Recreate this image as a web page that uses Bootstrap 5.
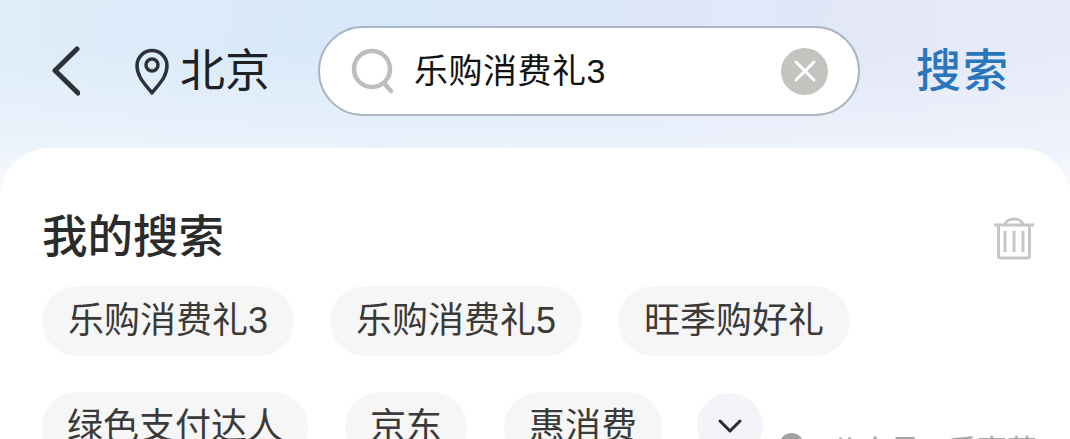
<!DOCTYPE html>
<html lang="zh-CN">
<head>
  <meta charset="UTF-8" />
  <meta name="viewport" content="width=device-width, initial-scale=1.0" />
  <title>搜索</title>
  <link href="https://cdn.jsdelivr.net/npm/bootstrap@5.3.3/dist/css/bootstrap.min.css" rel="stylesheet">
  <style>
    html, body { height: 100%; }
    body {
      overflow: hidden;
      position: relative;
      font-family: "Liberation Sans", "Noto Sans CJK SC", sans-serif;
      background:
        linear-gradient(180deg, rgba(240,245,252,0) 50px, rgba(240,245,252,.75) 148px, rgba(246,249,253,.95) 175px),
        linear-gradient(100deg, #dfedf9 0%, #d7e8f9 35%, #e2e7f8 72%, #e9ecf9 100%);
      color: #1f2226;
    }
    #top-bar { height: 148px; padding: 0 0 0 52px; }
    #back-btn { width: 28px; height: 50px; margin-right: 54px; margin-top: -6px; }
    #pin-icon { width: 36px; height: 48px; margin-right: 10px; margin-top: -6px; }
    #city { font-size: 45px; line-height: 1; width: 90px; margin-right: 48px; margin-top: -6px; color: #1d2125; }
    #search-box {
      width: 542px; height: 90px; margin-top: -6px;
      background: #fff; border: 2px solid #a9b6c2; border-radius: 45px;
      padding: 0 30px 0 31px;
    }
    #search-text { font-size: 34px; line-height: 1; margin-left: 19px; letter-spacing: .5px; color: #111; }
    #clear-btn { width: 47px; height: 47px; background: #c3c3bf; }
    #search-go { font-size: 45px; line-height: 1; font-weight: 500; margin-left: 56px; letter-spacing: 2px; margin-top: -6px; color: #2a76bd; white-space: nowrap; }
    #history {
      height: 291px; background: #fff;
      border-radius: 50px 50px 0 0;
      padding: 67px 36px 0 42px;
    }
    #history-title { font-size: 45.500px; line-height: 1; font-weight: 500; color: #2b2b2b; margin: 0; }
    #tag-wrap { margin-top: 25px; row-gap: 36px; }
    .tag-row { column-gap: 36px; }
    .tag-pill {
      height: 70px; padding: 0 26px; border-radius: 35px;
      background: #f6f6f7; font-size: 36px; line-height: 70px; color: #3a3a3a; white-space: nowrap;
    }
    .tag-row-tight { column-gap: 37px; }
    .tag-row-tight .tag-pill { padding: 0 25px; }
    #more-btn { width: 66px; height: 66px; background: #f3f3f8; margin: 1px 0 0 -2px; }
    #watermark {
      position: absolute; left: 779px; top: 433px;
      font-size: 30px; line-height: 1; color: #a6a6a6; white-space: nowrap;
    }
    #watermark i { width: 25px; height: 25px; background: #a2a2a2; margin-right: 26px; }
    #watermark span { margin-top: 3px; }
  </style>
</head>
<body>

  <!-- Top bar -->
  <div id="top-bar" class="d-flex align-items-center">
    <svg id="back-btn" class="flex-shrink-0" viewBox="0 0 28 50" fill="none" stroke="#2c3238" stroke-width="5" stroke-linecap="round" stroke-linejoin="round"><path d="M25 3 3 24.500 26 47"/></svg>
    <svg id="pin-icon" class="flex-shrink-0" viewBox="0 0 36 48" fill="none" stroke="#2c3238" stroke-width="3.500" stroke-linejoin="round"><path d="M18 46C11 37 3 30 3 18.500A15 15 0 0 1 33 18.500C33 30 25 37 18 46Z"/><circle cx="18" cy="18" r="6"/></svg>
    <div id="city">北京</div>
    <div id="search-box" class="d-flex align-items-center flex-shrink-0">
      <svg class="flex-shrink-0" width="44" height="46" viewBox="0 0 44 46" fill="none" stroke="#bdbdbd" stroke-width="4.500" stroke-linecap="round"><circle cx="21" cy="21" r="18"/><path d="M33 35 40 43"/></svg>
      <span id="search-text">乐购消费礼3</span>
      <span id="clear-btn" class="ms-auto rounded-circle d-flex align-items-center justify-content-center">
        <svg width="24" height="24" viewBox="0 0 24 24" stroke="#fff" stroke-width="3" stroke-linecap="round"><path d="M3 3 21 21M21 3 3 21"/></svg>
      </span>
    </div>
    <div id="search-go">搜索</div>
  </div>

  <!-- My searches -->
  <div id="history">
    <div class="d-flex align-items-center justify-content-between">
      <h2 id="history-title">我的搜索</h2>
      <svg width="40" height="44" viewBox="0 0 40 44" fill="none" stroke="#c6c6c6" stroke-width="3" stroke-linejoin="round"><path d="M0 9H40M11 9C12 1 28 1 29 9M4.500 9V40Q4.500 42 6.500 42H33.500Q35.500 42 35.500 40V9M11 15V36M20 15V36M29 15V36"/></svg>
    </div>
    <div id="tag-wrap" class="d-flex flex-column">
      <div class="tag-row d-flex align-items-start">
        <span class="tag-pill">乐购消费礼3</span>
        <span class="tag-pill">乐购消费礼5</span>
        <span class="tag-pill">旺季购好礼</span>
      </div>
      <div class="tag-row tag-row-tight d-flex align-items-start">
        <span class="tag-pill">绿色支付达人</span>
        <span class="tag-pill">京东</span>
        <span class="tag-pill">惠消费</span>
        <span id="more-btn" class="rounded-circle d-flex align-items-center justify-content-center">
          <svg width="24" height="14" viewBox="0 0 24 14" fill="none" stroke="#2c2c30" stroke-width="3" stroke-linecap="round" stroke-linejoin="round"><path d="M2 2 12 12 22 2"/></svg>
        </span>
      </div>
    </div>
  </div>

  <div id="watermark" class="d-flex align-items-start">
    <i class="rounded-circle d-block"></i>
    <span>公众号 · 乐嘉萌</span>
  </div>

</body>
</html>
